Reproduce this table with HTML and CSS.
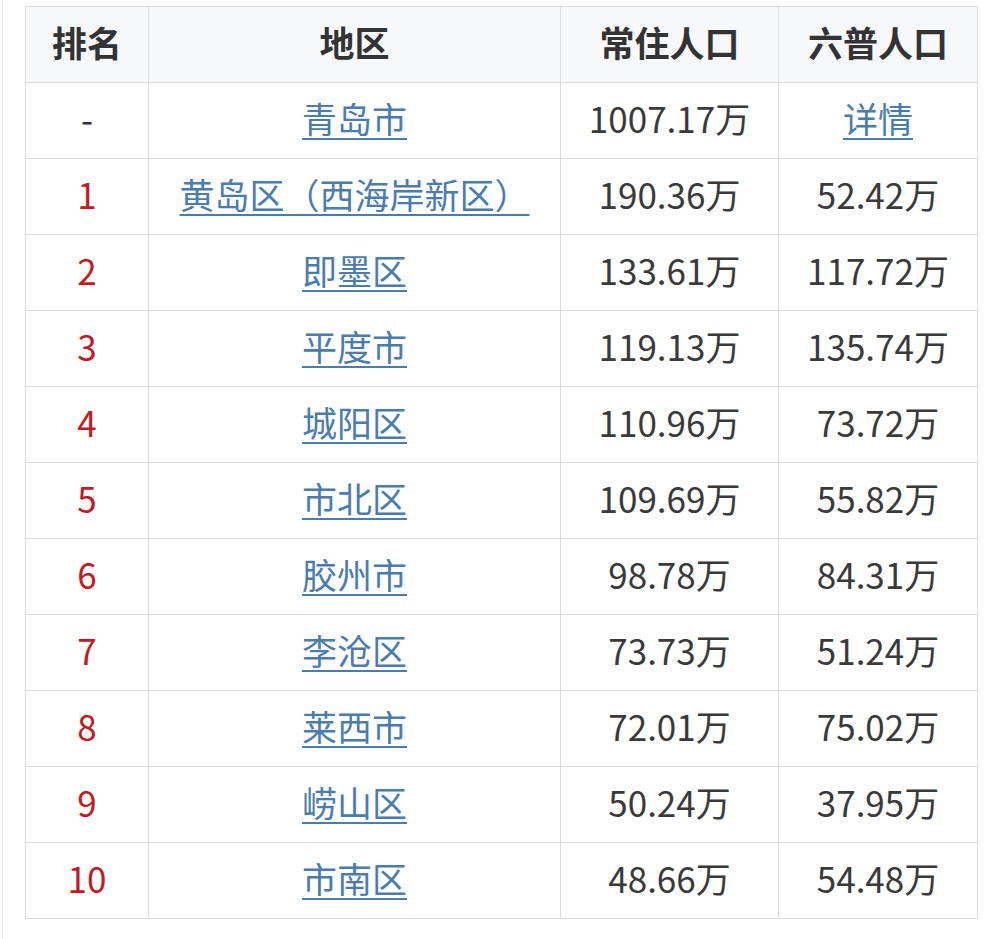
FILE: index.html
```
<!DOCTYPE html>
<html lang="zh-CN">
<head>
<meta charset="utf-8">
<title>青岛人口</title>
<link rel="stylesheet" href="styles.css">
</head>
<body>
<div class="page">
<table class="pop">
<colgroup>
<col class="c-rank"><col class="c-area"><col class="c-pop"><col class="c-six">
</colgroup>
<thead>
<tr><th>排名</th><th>地区</th><th>常住人口</th><th>六普人口</th></tr>
</thead>
<tbody>
<tr><td class="dash">-</td><td><a href="#">青岛市</a></td><td>1007.17万</td><td><a href="#">详情</a></td></tr>
<tr><td class="rank">1</td><td><a href="#">黄岛区（西海岸新区）</a></td><td>190.36万</td><td>52.42万</td></tr>
<tr><td class="rank">2</td><td><a href="#">即墨区</a></td><td>133.61万</td><td>117.72万</td></tr>
<tr><td class="rank">3</td><td><a href="#">平度市</a></td><td>119.13万</td><td>135.74万</td></tr>
<tr><td class="rank">4</td><td><a href="#">城阳区</a></td><td>110.96万</td><td>73.72万</td></tr>
<tr><td class="rank">5</td><td><a href="#">市北区</a></td><td>109.69万</td><td>55.82万</td></tr>
<tr><td class="rank">6</td><td><a href="#">胶州市</a></td><td>98.78万</td><td>84.31万</td></tr>
<tr><td class="rank">7</td><td><a href="#">李沧区</a></td><td>73.73万</td><td>51.24万</td></tr>
<tr><td class="rank">8</td><td><a href="#">莱西市</a></td><td>72.01万</td><td>75.02万</td></tr>
<tr><td class="rank">9</td><td><a href="#">崂山区</a></td><td>50.24万</td><td>37.95万</td></tr>
<tr><td class="rank">10</td><td><a href="#">市南区</a></td><td>48.66万</td><td>54.48万</td></tr>
</tbody>
</table>
</div>
</body>
</html>
```
FILE: styles.css
```
html, body {
  margin: 0;
  padding: 0;
  background: #ffffff;
}
body {
  font-family: "Noto Sans CJK SC", "Noto Sans", sans-serif;
  color: #333333;
}
.page {
  margin-left: 2px;
  border-left: 1px solid #ececec;
  min-height: 939px;
  box-sizing: border-box;
  padding: 6px 0 0 22px;
}
.pop {
  border-collapse: collapse;
  width: 952px;
  table-layout: fixed;
  font-size: 35px;
}
.c-rank { width: 123px; }
.c-area { width: 412px; }
.c-pop { width: 218px; }
.c-six { width: 199px; }
.pop th, .pop td {
  border: 1px solid #dcdcdc;
  height: 76px;
  box-sizing: border-box;
  padding: 0 0 5px 0;
  text-align: center;
  vertical-align: middle;
  line-height: 1.2;
  white-space: nowrap;
}
.pop th {
  background: #f7f8fa;
  font-weight: 700;
  color: #333333;
}
.pop td {
  color: #3a3a3a;
}
.pop a {
  color: #4a7cae;
  text-decoration: underline;
  text-underline-offset: 5px;
  text-decoration-thickness: 2px;
}
.pop td.rank {
  color: #c41a22;
}
.pop td.dash {
  color: #333333;
}
```
